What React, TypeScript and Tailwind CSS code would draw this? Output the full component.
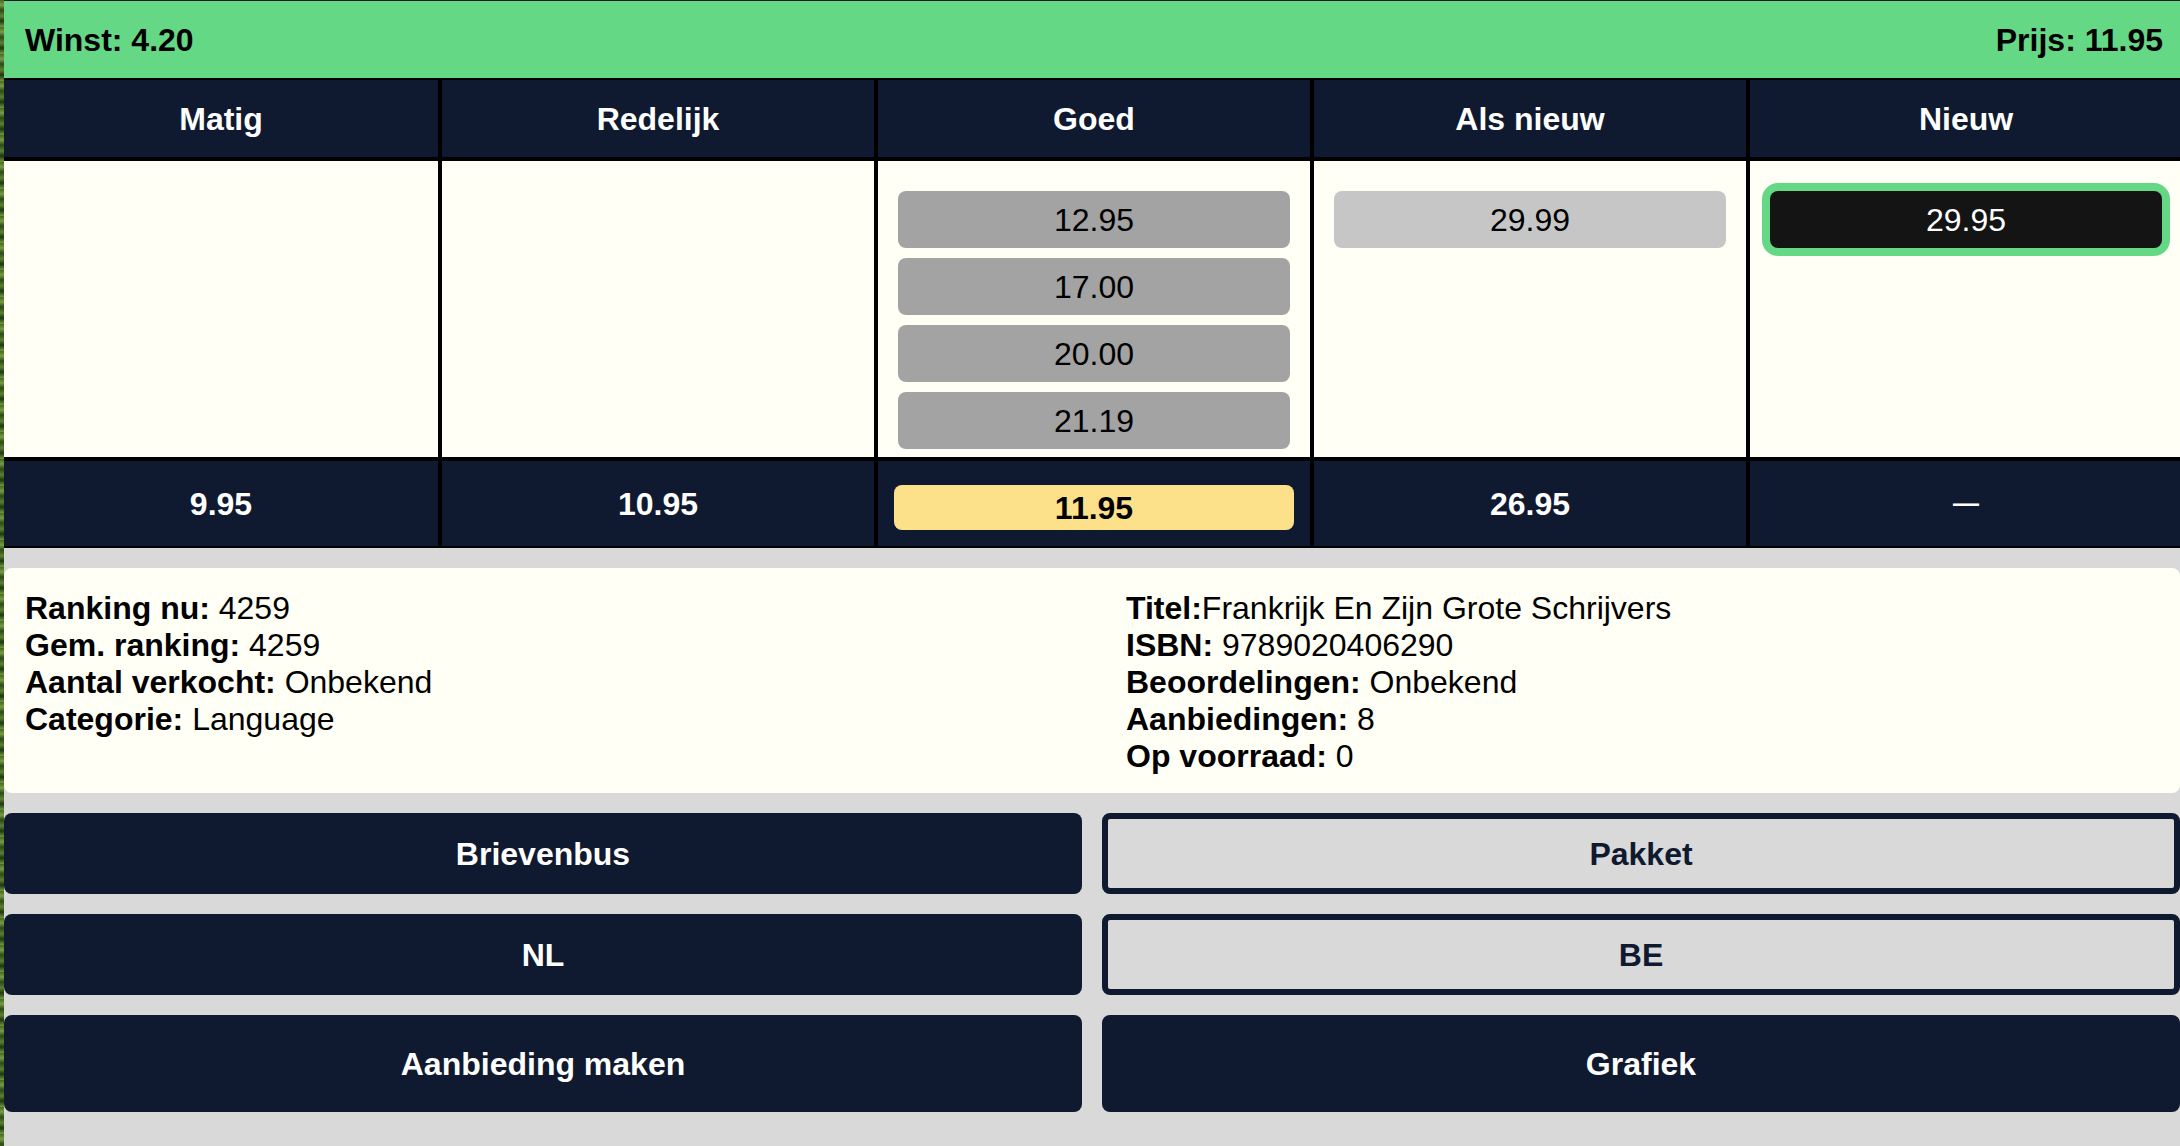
import React from "react";

const NAVY = "bg-[#0f1a30]";

function PriceButton({ value, tone }: { value: string; tone: "dark" | "light" | "black" }) {
  if (tone === "black") {
    return (
      <div className="h-[57px] rounded-[8px] bg-[#141414] ring-[8px] ring-[#65d886] flex items-center justify-center text-white text-[32px] leading-none">
        {value}
      </div>
    );
  }
  return (
    <div
      className={
        "h-[57px] rounded-[8px] flex items-center justify-center text-black text-[32px] leading-none " +
        (tone === "dark" ? "bg-[#a3a3a3]" : "bg-[#c6c6c6]")
      }
    >
      {value}
    </div>
  );
}

function Line({ label, value, tight }: { label: string; value: string; tight?: boolean }) {
  return (
    <div className="whitespace-nowrap">
      <span className="font-bold">{label}</span>
      {tight ? "" : " "}
      {value}
    </div>
  );
}

export default function App() {
  const headers = ["Matig", "Redelijk", "Goed", "Als nieuw", "Nieuw"];
  const colClass = (i: number) => (i === 0 ? "" : "border-l-4 border-black");

  return (
    <div className="flex w-[2180px] h-[1146px] overflow-hidden bg-[#d9d9d9] font-['Liberation_Sans',Arial,Helvetica,sans-serif] text-black">
      <div className="w-[4px] shrink-0 bg-[repeating-linear-gradient(180deg,#3f6b22_0px,#7a9a44_5px,#2c4a18_10px,#5c8030_16px,#1f3512_21px,#6f9a3c_27px)]" />
      <div className="w-[2178px] shrink-0 flex flex-col">
        {/* top bar */}
        <div className="h-[78px] border-t border-[#0f1a30] bg-[#65d886] flex items-center justify-between pl-[21px] pr-[19px] text-[32px] font-bold">
          <span>Winst: 4.20</span>
          <span>Prijs: 11.95</span>
        </div>
        <div className="h-[2px] bg-black" />

        {/* condition header */}
        <div className={"grid grid-cols-[434px_repeat(4,436px)] h-[77px] " + NAVY}>
          {headers.map((h, i) => (
            <div key={h} className={"flex items-center justify-center text-white font-bold text-[32px] " + colClass(i)}>
              {h}
            </div>
          ))}
        </div>
        <div className="h-[4px] bg-black" />

        {/* offers body */}
        <div className="grid grid-cols-[434px_repeat(4,436px)] h-[296px] bg-[#fffff5]">
          <div className={colClass(0)} />
          <div className={colClass(1)} />
          <div className={"flex flex-col gap-[10px] pt-[30px] px-[20px] " + colClass(2)}>
            <PriceButton value="12.95" tone="dark" />
            <PriceButton value="17.00" tone="dark" />
            <PriceButton value="20.00" tone="dark" />
            <PriceButton value="21.19" tone="dark" />
          </div>
          <div className={"flex flex-col gap-[10px] pt-[30px] px-[20px] " + colClass(3)}>
            <PriceButton value="29.99" tone="light" />
          </div>
          <div className={"flex flex-col gap-[10px] pt-[30px] px-[20px] " + colClass(4)}>
            <PriceButton value="29.95" tone="black" />
          </div>
        </div>
        <div className="h-[4px] bg-black" />

        {/* footer prices */}
        <div className={"grid grid-cols-[434px_repeat(4,436px)] h-[85px] text-[32px] font-bold text-white " + NAVY}>
          <div className={"flex items-center justify-center " + colClass(0)}>9.95</div>
          <div className={"flex items-center justify-center " + colClass(1)}>10.95</div>
          <div className={"flex items-center px-[16px] pt-[8px] " + colClass(2)}>
            <div className="w-full h-[45px] rounded-[8px] bg-[#fde18a] text-black flex items-center justify-center">
              11.95
            </div>
          </div>
          <div className={"flex items-center justify-center " + colClass(3)}>26.95</div>
          <div className={"flex items-center justify-center text-[26px] " + colClass(4)}>—</div>
        </div>
        <div className="h-[2px] bg-black" />

        {/* lower section */}
        <div className="w-[2176px] flex flex-col gap-[20px] pt-[20px]">
          <div className="grid grid-cols-2 gap-[20px] h-[225px] rounded-[8px] bg-[#fffff5] pt-[22px] text-[32px] leading-[37px]">
            <div className="px-[21px]">
              <Line label="Ranking nu:" value="4259" />
              <Line label="Gem. ranking:" value="4259" />
              <Line label="Aantal verkocht:" value="Onbekend" />
              <Line label="Categorie:" value="Language" />
            </div>
            <div className="px-[24px]">
              <Line label="Titel:" value="Frankrijk En Zijn Grote Schrijvers" tight />
              <Line label="ISBN:" value="9789020406290" />
              <Line label="Beoordelingen:" value="Onbekend" />
              <Line label="Aanbiedingen:" value="8" />
              <Line label="Op voorraad:" value="0" />
            </div>
          </div>

          <div className="grid grid-cols-2 gap-[20px] text-[32px] font-bold">
            <button className="h-[81px] rounded-[8px] bg-[#0f1a30] text-white">Brievenbus</button>
            <button className="h-[81px] rounded-[8px] border-[6px] border-[#0f1a30] bg-[#d9d9d9] text-[#0f1a30]">Pakket</button>
            <button className="h-[81px] rounded-[8px] bg-[#0f1a30] text-white">NL</button>
            <button className="h-[81px] rounded-[8px] border-[6px] border-[#0f1a30] bg-[#d9d9d9] text-[#0f1a30]">BE</button>
            <button className="h-[97px] rounded-[8px] bg-[#0f1a30] text-white">Aanbieding maken</button>
            <button className="h-[97px] rounded-[8px] bg-[#0f1a30] text-white">Grafiek</button>
          </div>
        </div>
      </div>
    </div>
  );
}
